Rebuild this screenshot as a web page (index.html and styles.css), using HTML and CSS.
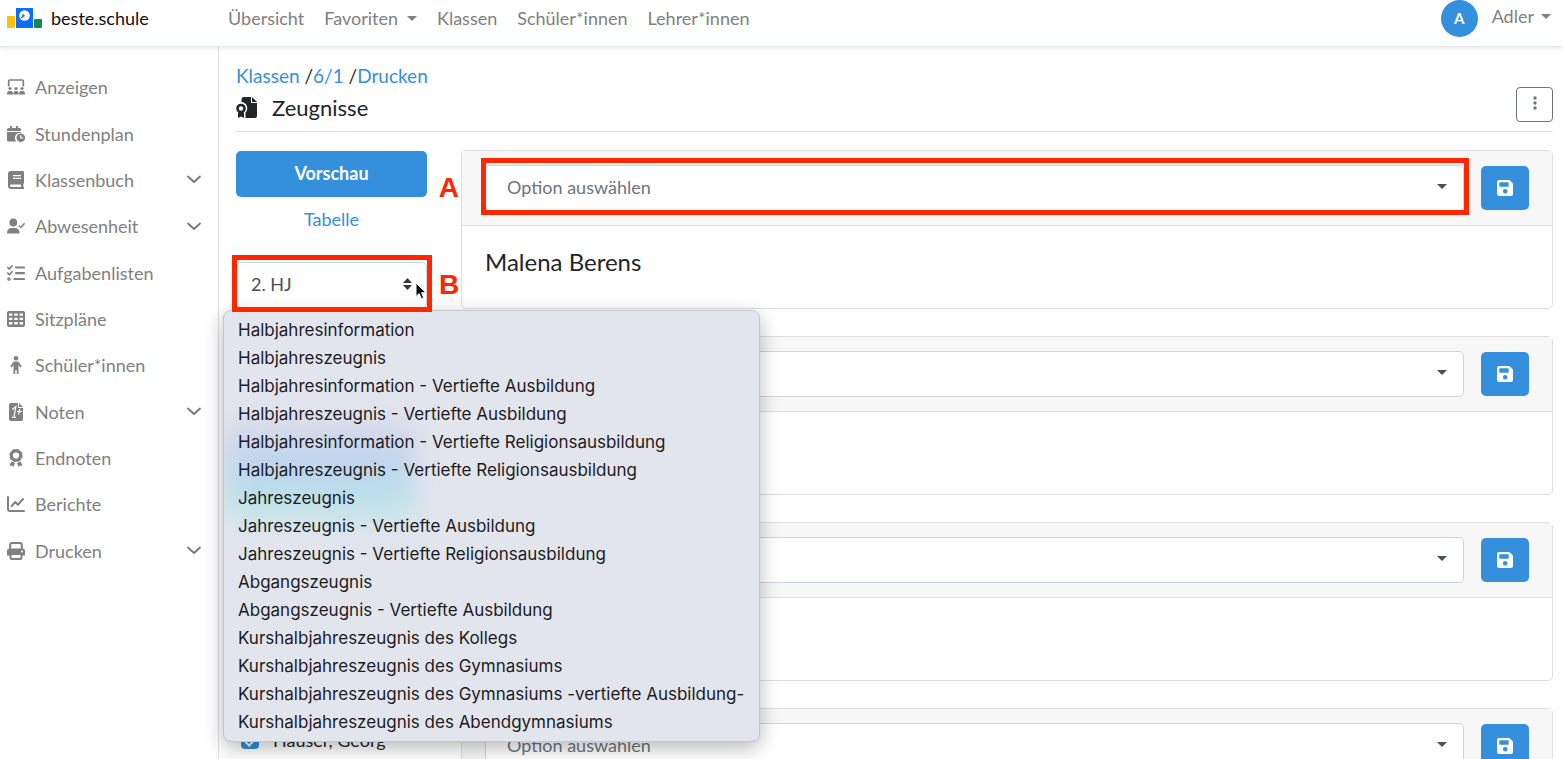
FILE: index.html
```html
<!DOCTYPE html>
<html lang="de">
<head>
<meta charset="utf-8">
<meta name="viewport" content="width=device-width, initial-scale=1">
<title>Zeugnisse – beste.schule</title>
<link rel="stylesheet" href="styles.css">
</head>
<body>
<svg class="sprite" aria-hidden="true">
  <symbol id="i-save" viewBox="0 0 18 18"><path fill="currentColor" fill-rule="evenodd" d="M3 1h9.500q1 0 1.700.7l2.100 2.100q.7.7.7 1.700V15q0 2-2 2H3q-2 0-2-2V3q0-2 2-2zm1.200 2.200q-.9 0-.9.900v2.800q0 .9.900.9h7.600q.9 0 .9-.9V4.100q0-.9-.9-.9zM9.200 10a2.300 2.300 0 1 0 0 4.600a2.300 2.300 0 0 0 0-4.600z"/></symbol>
  <symbol id="i-chevron" viewBox="0 0 14 9"><path d="M1 1.500l6 5.500 6-5.500" fill="none" stroke="currentColor" stroke-width="1.700" stroke-linecap="round" stroke-linejoin="round"/></symbol>
  <symbol id="i-caret" viewBox="0 0 10 5"><path d="M0 0h10L5 5z" fill="currentColor"/></symbol>
</svg>
<div class="app">
  <header class="topbar">
    <a class="brand" href="#">
      <svg class="brand-logo" viewBox="0 0 36 20" aria-hidden="true">
        <rect x="0" y="8" width="8" height="12" rx="1" fill="#ffc107"/>
        <rect x="9" y="0" width="17" height="20" fill="#0d6efd"/>
        <rect x="27" y="11" width="8" height="9" rx="1" fill="#198754"/>
        <circle cx="17.500" cy="7.500" r="5.300" fill="#fff"/>
        <path d="M17.500 8l-2.200-1.400M14 9.800l2.500-1.400" stroke="#0d6efd" stroke-width="1.500" fill="none"/>
      </svg>
      beste.schule
    </a>
    <nav class="topnav">
      <a href="#">Übersicht</a>
      <a href="#">Favoriten <svg class="caret"><use href="#i-caret"/></svg></a>
      <a href="#">Klassen</a>
      <a href="#">Schüler*innen</a>
      <a href="#">Lehrer*innen</a>
    </nav>
    <div class="account">
      <span class="avatar">A</span>
      <a class="account-name" href="#">Adler <svg class="caret"><use href="#i-caret"/></svg></a>
    </div>
  </header>

  <div class="shell">
    <nav class="sidebar">
      <ul>
        <li><a href="#"><svg class="icon" viewBox="0 0 18 18" fill="currentColor"><path d="M1.700 8.500V3q0-1 1-1h12.600q1 0 1 1v5.500" fill="none" stroke="currentColor" stroke-width="1.700"/><circle cx="3" cy="10.500" r="1.600"/><circle cx="9" cy="10.500" r="1.600"/><circle cx="15" cy="10.500" r="1.600"/><path d="M0 16.500q0-3.500 2-3.500h2q2 0 2 3.500zM6.300 16.500q0-3.500 2-3.500h1.400q2 0 2 3.500zM12 16.500q0-3.500 2-3.500h2q2 0 2 3.500z"/></svg>Anzeigen</a></li>
        <li><a href="#"><svg class="icon" viewBox="0 0 18 18" fill="currentColor"><path d="M3 1h2v2h4V1h2v2h1.500q1.500 0 1.500 1.500V6H0V4.500Q0 3 1.500 3H3zM0 7h14v1a5 5 0 0 0-4.500 8.500h-8Q0 16.500 0 15z"/><path fill-rule="evenodd" d="M13.800 8.400a4.300 4.300 0 1 0 0 8.600a4.300 4.300 0 0 0 0-8.600zm-.6 1.800h1.200v2.200h1.800v1.200h-3z"/></svg>Stundenplan</a></li>
        <li><a href="#"><svg class="icon" viewBox="0 0 18 18" fill="currentColor"><path fill-rule="evenodd" d="M4 0h12q1 0 1 1v11q0 .7-.7 1v3h.7v2H4q-3 0-3-3V3q0-3 3-3zM6 4v1.200h8V4zM6 6.800V8h8V6.800zM4.200 13.500q-1.200 0-1.200 1.200T4.200 16H14v-2.500z"/></svg>Klassenbuch</a><svg class="chevron"><use href="#i-chevron"/></svg></li>
        <li><a href="#"><svg class="icon" viewBox="0 0 18 18" fill="currentColor"><circle cx="6.300" cy="5.500" r="3.900"/><path d="M0 16.500q0-5.500 4.500-5.500h3.600q4.500 0 4.500 5.500z"/><path d="M11.800 8.500l2 2 3.800-4.200" fill="none" stroke="currentColor" stroke-width="1.500"/></svg>Abwesenheit</a><svg class="chevron"><use href="#i-chevron"/></svg></li>
        <li><a href="#"><svg class="icon" viewBox="0 0 18 18" fill="none" stroke="currentColor" stroke-width="2.200" stroke-linecap="round"><path d="M9 3.500h8M9 9.200h8M7.500 15h9.500"/><path stroke-width="1.700" d="M.8 3.500l1.500 1.500 2.700-3M.8 9.200l1.500 1.500 2.700-3"/><circle cx="2" cy="15" r=".7"/></svg>Aufgabenlisten</a></li>
        <li><a href="#"><svg class="icon" viewBox="0 0 18 18" fill="currentColor"><path fill-rule="evenodd" d="M2 1h14q2 0 2 2v12q0 2-2 2H2q-2 0-2-2V3q0-2 2-2zm0 2.500v2.300h3.400V3.500zm5.300 0v2.300h3.400V3.500zm5.300 0v2.300H16V3.500zM2 7.700V10h3.400V7.700zm5.300 0V10h3.400V7.700zm5.300 0V10H16V7.700zM2 12v2.500h3.400V12zm5.300 0v2.500h3.400V12zm5.300 0v2.500H16V12z"/></svg>Sitzpläne</a></li>
        <li><a href="#"><svg class="icon" viewBox="0 0 18 18" fill="currentColor"><circle cx="9" cy="2.300" r="2.300"/><path d="M7.500 5.500h3q1 0 1.600.9l2.600 4-1.600 1.100-1.600-2.400v8.900H9.700v-4H8.300v4H6.500V9.100l-1.600 2.400-1.600-1.100 2.600-4q.6-.9 1.600-.9z"/></svg>Schüler*innen</a></li>
        <li><a href="#"><svg class="icon" viewBox="0 0 18 18" fill="currentColor"><path d="M4 0h7v5h5v11q0 2-2 2H4q-2 0-2-2V2q0-2 2-2z"/><path d="M12 0l4 4h-4z"/><path d="M5.300 6.500l3.500-2.700-1.800 10M5 14.300h4M10 8.500h5M12.700 6l-1 5.500" fill="none" stroke="#fff" stroke-width="1.200"/></svg>Noten</a><svg class="chevron"><use href="#i-chevron"/></svg></li>
        <li><a href="#"><svg class="icon" viewBox="0 0 18 18" fill="currentColor"><circle cx="9" cy="6.500" r="4.700" fill="none" stroke="currentColor" stroke-width="3.200"/><circle cx="9" cy="6.500" r="6" fill="none" stroke="currentColor" stroke-width="1.200" stroke-dasharray="2.700 2"/><path d="M4.500 12.500l3.500 1.400L6.300 18l-1.600-1.600-2.500.3zM13.500 12.500L10 13.900l1.700 4.100 1.600-1.600 2.500.3z"/></svg>Endnoten</a></li>
        <li><a href="#"><svg class="icon" viewBox="0 0 18 18" fill="none" stroke="currentColor" stroke-width="2" stroke-linecap="round" stroke-linejoin="round"><path d="M1 2v12q0 2 2 2h14M4.700 11l3.500-4 2.800 2.700 5-5.700"/></svg>Berichte</a></li>
        <li><a href="#"><svg class="icon" viewBox="0 0 18 18" fill="currentColor"><path d="M3.200 7V3q0-2 2-2h7.600q2 0 2 2v4" fill="none" stroke="currentColor" stroke-width="2"/><path fill-rule="evenodd" d="M2.500 6.500h13Q18 6.500 18 9v4.500h-2.500V16q0 2-2 2h-9q-2 0-2-2v-2.500H0V9q0-2.500 2.500-2.500zm2 6.500v3h9v-3zM15 8.500a1 1 0 1 0 0 2a1 1 0 0 0 0-2z"/></svg>Drucken</a><svg class="chevron"><use href="#i-chevron"/></svg></li>
      </ul>
    </nav>

    <main class="content">
      <div class="page-head">
        <div>
          <nav class="crumbs"><a href="#">Klassen</a> /<a href="#">6/1</a> /<a href="#">Drucken</a></nav>
          <h1 class="title">
            <svg class="title-icon" viewBox="0 0 22 22" aria-hidden="true"><path fill="#212529" d="M8 0h7v6h6v13q0 2-2 2H9.500v-5.500A6.200 6.200 0 0 0 5.500 5V2.500Q5.500 0 8 0z"/><path fill="#212529" d="M16 0l5 5h-5z"/><circle cx="5" cy="11.500" r="3.500" fill="none" stroke="#212529" stroke-width="2.600"/><path fill="#212529" d="M2 15.500h6V21l-3-1.500L2 21z"/></svg>
            Zeugnisse
          </h1>
        </div>
        <button class="more" type="button" aria-label="Mehr"><svg viewBox="0 0 4 14"><circle cx="2" cy="2" r="1.700"/><circle cx="2" cy="7" r="1.700"/><circle cx="2" cy="12" r="1.700"/></svg></button>
      </div>

      <div class="columns">
        <aside class="controls">
          <button class="btn btn-primary" type="button">Vorschau</button>
          <button class="btn btn-link" type="button">Tabelle</button>
          <div class="field field-term">
            <select aria-label="Halbjahr"><option>2. HJ</option></select>
            <svg class="updown" viewBox="0 0 9 12"><path d="M0 5h9L4.500 0zM0 7h9l-4.500 5z" fill="#343a40"/></svg>
            <ul class="menu" role="listbox" aria-label="Zeugnisart">
              <li role="option">Halbjahresinformation</li>
              <li role="option">Halbjahreszeugnis</li>
              <li role="option">Halbjahresinformation - Vertiefte Ausbildung</li>
              <li role="option">Halbjahreszeugnis - Vertiefte Ausbildung</li>
              <li role="option">Halbjahresinformation - Vertiefte Religionsausbildung</li>
              <li role="option">Halbjahreszeugnis - Vertiefte Religionsausbildung</li>
              <li role="option">Jahreszeugnis</li>
              <li role="option">Jahreszeugnis - Vertiefte Ausbildung</li>
              <li role="option">Jahreszeugnis - Vertiefte Religionsausbildung</li>
              <li role="option">Abgangszeugnis</li>
              <li role="option">Abgangszeugnis - Vertiefte Ausbildung</li>
              <li role="option">Kurshalbjahreszeugnis des Kollegs</li>
              <li role="option">Kurshalbjahreszeugnis des Gymnasiums</li>
              <li role="option">Kurshalbjahreszeugnis des Gymnasiums -vertiefte Ausbildung-</li>
              <li role="option">Kurshalbjahreszeugnis des Abendgymnasiums</li>
            </ul>
            <span class="mark"></span>
            <span class="mark-label mark-label-right">B</span>
            <svg class="cursor" viewBox="0 0 12 18" aria-hidden="true"><path d="M1 1v13.500l3.200-3 2.200 5.200 2.300-1-2.200-5H11z" fill="#000" stroke="#fff"/></svg>
          </div>
          <label class="student"><input type="checkbox" checked>Hauser, Georg</label>
        </aside>

        <div class="cards">
          <section class="card">
            <div class="card-head">
              <div class="field"><select aria-label="Option"><option>Option auswählen</option></select><svg class="caret"><use href="#i-caret"/></svg><span class="mark"></span><span class="mark-label mark-label-left">A</span></div>
              <button class="save" type="button" aria-label="Speichern"><svg><use href="#i-save"/></svg></button>
            </div>
            <div class="card-body">Malena Berens</div>
          </section>
          <section class="card">
            <div class="card-head">
              <div class="field"><select aria-label="Option"><option>Option auswählen</option></select><svg class="caret"><use href="#i-caret"/></svg></div>
              <button class="save" type="button" aria-label="Speichern"><svg><use href="#i-save"/></svg></button>
            </div>
            <div class="card-body"></div>
          </section>
          <section class="card">
            <div class="card-head">
              <div class="field"><select aria-label="Option"><option>Option auswählen</option></select><svg class="caret"><use href="#i-caret"/></svg></div>
              <button class="save" type="button" aria-label="Speichern"><svg><use href="#i-save"/></svg></button>
            </div>
            <div class="card-body"></div>
          </section>
          <section class="card">
            <div class="card-head">
              <div class="field"><select aria-label="Option"><option>Option auswählen</option></select><svg class="caret"><use href="#i-caret"/></svg></div>
              <button class="save" type="button" aria-label="Speichern"><svg><use href="#i-save"/></svg></button>
            </div>
            <div class="card-body"></div>
          </section>
        </div>
      </div>
    </main>
  </div>
</div>
</body>
</html>
```

FILE: styles.css
```css
* { box-sizing: border-box; }

body {
  margin: 0;
  font: 18px/28px Lato, "Open Sans", sans-serif;
  color: #212529;
  background: #fff;
}

a { color: #3490dc; text-decoration: none; }
ul { list-style: none; margin: 0; padding: 0; }
svg { display: block; }
button, select, input { font: inherit; margin: 0; }

.sprite { position: absolute; width: 0; height: 0; }

.app {
  display: flex;
  flex-direction: column;
  height: 100vh;
  overflow: hidden;
}

/* Top bar */
.topbar {
  position: relative;
  z-index: 1;
  flex: none;
  display: flex;
  align-items: flex-start;
  height: 46px;
  padding: 0 12px 0 7px;
  background: #fff;
  box-shadow: 0 1px 0 #e1e8f2, 0 2px 5px rgba(0, 0, 0, .1);
}
.brand {
  display: flex;
  align-items: center;
  gap: 8px;
  width: 221px;
  padding-top: 4px;
  color: #111;
}
.brand-logo { width: 36px; height: 20px; }
.topnav {
  display: flex;
  gap: 20px;
  padding-top: 4px;
}
.topnav a, .account-name {
  display: flex;
  align-items: center;
  gap: 9px;
  color: #808080;
}
.caret { width: 10px; height: 5px; flex: none; }
.account {
  display: flex;
  gap: 14px;
  margin-left: auto;
}
.account-name { gap: 7px; height: 32px; }
.avatar {
  width: 37px;
  height: 37px;
  border-radius: 50%;
  background: #3490dc;
  color: #fff;
  font-size: 15px;
  font-weight: 700;
  line-height: 36px;
  text-align: center;
}

.shell { flex: 1; display: flex; min-height: 0; }

/* Sidebar */
.sidebar {
  flex: none;
  width: 219px;
  padding-top: 18px;
  border-right: 1px solid #dee2e6;
}
.sidebar ul {
  display: grid;
  grid-template-rows: repeat(11, 1fr);
  height: 510px;
}
.sidebar li {
  display: flex;
  align-items: center;
  justify-content: space-between;
  padding: 0 17px 0 7px;
}
.sidebar a {
  display: flex;
  align-items: center;
  gap: 10px;
  color: #808080;
}
.icon { width: 18px; height: 18px; }
.chevron { width: 14px; height: 9px; color: #757575; }

/* Content */
.content {
  flex: 1;
  min-width: 0;
  padding: 16px 10px 0 17px;
}
.page-head {
  display: flex;
  align-items: flex-end;
  justify-content: space-between;
  height: 70px;
  padding-bottom: 9px;
  border-bottom: 1px solid #dee2e6;
}
.crumbs { font-size: 19px; }
.title {
  display: flex;
  align-items: center;
  gap: 14px;
  margin: 4px 0 0;
  font-size: 22px;
  font-weight: 400;
  line-height: 28px;
}
.title-icon { width: 22px; height: 22px; }
.more {
  display: grid;
  place-items: center;
  width: 37px;
  height: 35px;
  padding: 0 0 3px;
  border: 1px solid #6c757d;
  border-radius: 4px;
  background: #fff;
}
.more svg { width: 4px; height: 14px; fill: #6c757d; }

.columns {
  display: grid;
  grid-template-columns: 191px 1fr;
  gap: 34px;
  padding-top: 18px;
}

.controls { display: flex; flex-direction: column; padding-top: 1px; }
.btn {
  height: 46px;
  padding: 0 0 2px;
  border: 0;
  border-radius: 5px;
  background: none;
}
.btn-primary { background: #3490dc; color: #fff; font-weight: 700; }
.btn-link { color: #3490dc; }

.field { position: relative; flex: 1; }
.field select {
  display: block;
  width: 100%;
  height: 46px;
  padding: 0 21px 3px;
  border: 1px solid #ced4da;
  border-radius: 5px;
  background: #fff;
  color: #6c757d;
  appearance: none;
}
.field > .caret {
  position: absolute;
  right: 17px;
  top: 19px;
  color: #495057;
}
.field-term { flex: none; margin-top: 19px; }
.field-term select { padding: 0 14px 2px; color: #495057; }
.updown {
  position: absolute;
  right: 15px;
  top: 16px;
  width: 9px;
  height: 12px;
}
.cursor {
  position: absolute;
  z-index: 4;
  right: 0;
  top: 20px;
  width: 12px;
  height: 18px;
}

/* Callout frames */
.mark {
  position: absolute;
  z-index: 3;
  inset: -7px -5px -4px -4px;
  border: 5px solid #ff2600;
  pointer-events: none;
}
.mark-label {
  position: absolute;
  top: 9px;
  color: #ff2600;
  font: bold 28px/28px "Liberation Sans", Arial, sans-serif;
}
.mark-label-left { right: calc(100% + 26px); }
.mark-label-right { left: calc(100% + 12px); }

/* Open option list */
.menu {
  position: absolute;
  z-index: 2;
  left: -13px;
  top: calc(100% + 2px);
  width: 537px;
  padding: 5px 14px;
  overflow: hidden;
  border: 1px solid #c4c6cb;
  border-radius: 8px;
  background: #e3e5ed;
  box-shadow: 0 6px 20px rgba(0, 0, 0, .28);
  color: #1c1c1e;
  font: 17px/28px Inter, sans-serif;
  white-space: nowrap;
}
.menu::before {
  content: "";
  position: absolute;
  z-index: -1;
  left: 0;
  top: 110px;
  width: 190px;
  height: 100px;
  background: linear-gradient(#d6d8e8, #bcd4ee 45%, #b8e0e8 75%, #c8e6e8);
  filter: blur(14px);
}

.student {
  display: flex;
  align-items: center;
  gap: 14px;
  margin-top: 418px;
  padding-left: 5px;
}
.student input {
  appearance: none;
  width: 18px;
  height: 18px;
  border-radius: 4px;
  background: #3490dc;
  display: grid;
  place-items: center;
}
.student input::after {
  content: "";
  width: 5px;
  height: 9px;
  border: solid #fff;
  border-width: 0 2px 2px 0;
  transform: rotate(45deg);
}

/* Cards */
.cards { display: flex; flex-direction: column; gap: 27px; }
.card {
  border: 1px solid #dfdfdf;
  border-radius: 5px;
}
.card-head {
  display: flex;
  align-items: center;
  gap: 17px;
  padding: 14px 23px;
  border-bottom: 1px solid #dfdfdf;
  background: #f7f7f7;
}
.card-body {
  min-height: 82px;
  padding: 22px 23px;
  font-size: 24px;
}
.save {
  display: grid;
  place-items: center;
  width: 48px;
  height: 44px;
  padding: 0;
  border: 0;
  border-radius: 5px;
  background: #3490dc;
  color: #fff;
}
.save svg { width: 18px; height: 18px; }
```
